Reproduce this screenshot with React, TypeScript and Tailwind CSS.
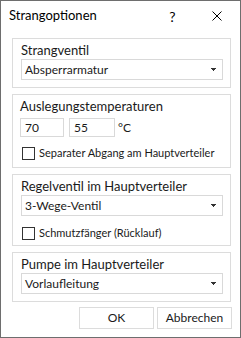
import React from "react";

type SelectProps = { value: string };

function Select({ value }: SelectProps) {
    return <div className="flex items-center justify-between h-[21px] border border-[#d9d9d9] bg-white pl-[3px] pr-[6px] text-[12px] text-[#1a1a1a] whitespace-nowrap">
        <span>{value}</span>
        <svg width="5" height="3" viewBox="0 0 5 3" shapeRendering="crispEdges">
            <rect x="0" y="0" width="5" height="1" fill="#333" />
            <rect x="1" y="1" width="3" height="1" fill="#333" />
            <rect x="2" y="2" width="1" height="1" fill="#333" />
        </svg>
    </div>
}

function Check({ label }: { label: string }) {
    return <label className="flex items-center h-[13px] gap-[4px] text-[11px] text-[#1a1a1a] whitespace-nowrap">
        <span className="w-[13px] h-[13px] border border-[#333] bg-white shrink-0" />
        <span>{label}</span>
    </label>
}

function Group({ title, className, children }: { title: string, className: string, children: React.ReactNode }) {
    return <div className={`border border-[#dcdcdc] pr-[7px] ${className}`}>
        <div className="text-[13px] leading-[18px] text-[#1a1a1a] pt-[2px] whitespace-nowrap">{title}</div>
        {children}
    </div>
}

export default function App() {
    return <div
        className="w-[241px] h-[338px] bg-white border border-[#6e6e6e] flex flex-col"
        style={{ fontFamily: 'Lato, "Noto Sans", sans-serif' }}
    >
        <div className="h-[30px] flex items-center pl-[8px] text-[13px] text-black">
            <span className="flex-1">Strangoptionen</span>
            <span className="w-[40px] pr-[3px] text-center text-[14px]">?</span>
            <span className="w-[46px] flex justify-center">
                <svg width="10" height="10" viewBox="0 0 10 10">
                    <path d="M0.5 0.5L9.5 9.5M9.5 0.5L0.5 9.5" stroke="#000" strokeWidth="1" />
                </svg>
            </span>
        </div>

        <div className="flex flex-col pl-[11px] pr-[9px] pt-[7px]">
            <Group title="Strangventil" className="h-[50px] pl-[8px]">
                <Select value="Absperrarmatur" />
            </Group>

            <Group title="Auslegungstemperaturen" className="h-[74px] mt-[6px] pl-[7px]">
                <div className="flex items-center mt-[3px]">
                    <div className="w-[44px] h-[19px] border border-[#d9d9d9] pl-[4px] text-[12px] leading-[17px] text-[#1a1a1a]">70</div>
                    <div className="w-[46px] h-[19px] ml-[5px] border border-[#d9d9d9] pl-[4px] text-[12px] leading-[17px] text-[#1a1a1a]">55</div>
                    <span className="text-[12px] text-[#1a1a1a] ml-[3px]">°C</span>
                </div>
                <div className="mt-[10px] ml-[2px]"><Check label="Separater Abgang am Hauptverteiler" /></div>
            </Group>

            <Group title="Regelventil im Hauptverteiler" className="h-[72px] mt-[6px] pl-[8px]">
                <Select value="3-Wege-Ventil" />
                <div className="mt-[11px] ml-[1px]"><Check label="Schmutzfänger (Rücklauf)" /></div>
            </Group>

            <Group title="Pumpe im Hauptverteiler" className="h-[50px] mt-[6px] pl-[8px]">
                <Select value="Vorlaufleitung" />
            </Group>

            <div className="flex justify-end gap-[3px] mt-[5px] -mr-[1px]">
                <button className="w-[75px] h-[22px] border border-[#dcdcdc] bg-white text-[12px] text-[#1a1a1a]">OK</button>
                <button className="w-[75px] h-[22px] border border-[#dcdcdc] bg-white text-[12px] text-[#1a1a1a]">Abbrechen</button>
            </div>
        </div>
    </div>
}
